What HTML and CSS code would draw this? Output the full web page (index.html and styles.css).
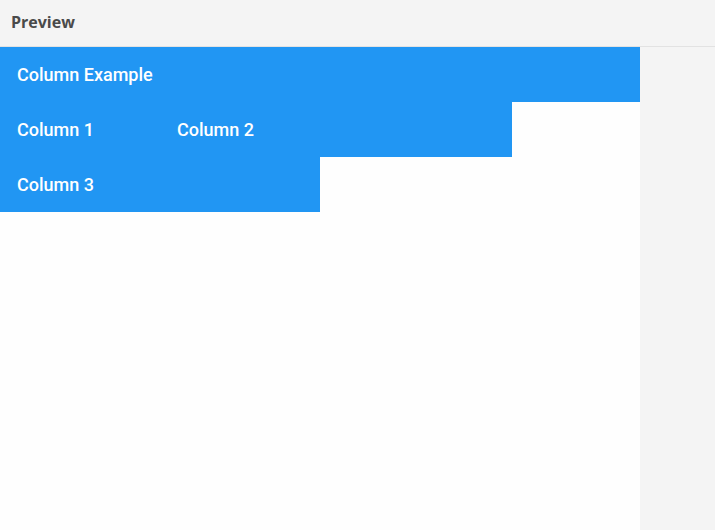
FILE: index.html
```html
<!DOCTYPE html>
<html>
<head>
<meta charset="utf-8">
<link rel="stylesheet" href="styles.css">
</head>
<body>
<div class="header">Preview</div>
<div class="main">
  <div class="canvas">
    <div class="row row-full"><div class="cell">Column Example</div></div>
    <div class="row row-80"><div class="cell cell-fixed">Column 1</div><div class="cell">Column 2</div></div>
    <div class="row row-50"><div class="cell">Column 3</div></div>
  </div>
  <div class="side"></div>
</div>
</body>
</html>
```
FILE: styles.css
```css
html, body {
  margin: 0;
  padding: 0;
  height: 100%;
}
body {
  display: flex;
  flex-direction: column;
  background: #f4f4f4;
  font-family: "Open Sans", "Liberation Sans", sans-serif;
}
.header {
  box-sizing: border-box;
  border-bottom: 1px solid #e2e2e2;
  height: 47px;
  padding-left: 11px;
  display: flex;
  align-items: center;
  padding-bottom: 2px;
  font-size: 16px;
  font-weight: 700;
  color: #4a4a4a;
  background: #f4f4f4;
}
.main {
  flex: 1;
  display: flex;
}
.canvas {
  width: 640px;
  background: #fefefe;
}
.side {
  flex: 1;
  background: #f4f4f4;
}
.row {
  display: flex;
  height: 55px;
  background: #2196f3;
}
.row-full { width: 640px; }
.row-80 { width: 512px; }
.row-50 { width: 320px; }
.cell {
  display: flex;
  align-items: center;
  padding-left: 17px;
  color: #ffffff;
  font-family: Roboto, "Liberation Sans", sans-serif;
  font-weight: 500;
  font-size: 18px;
}
.cell-fixed {
  width: 143px;
}
```
